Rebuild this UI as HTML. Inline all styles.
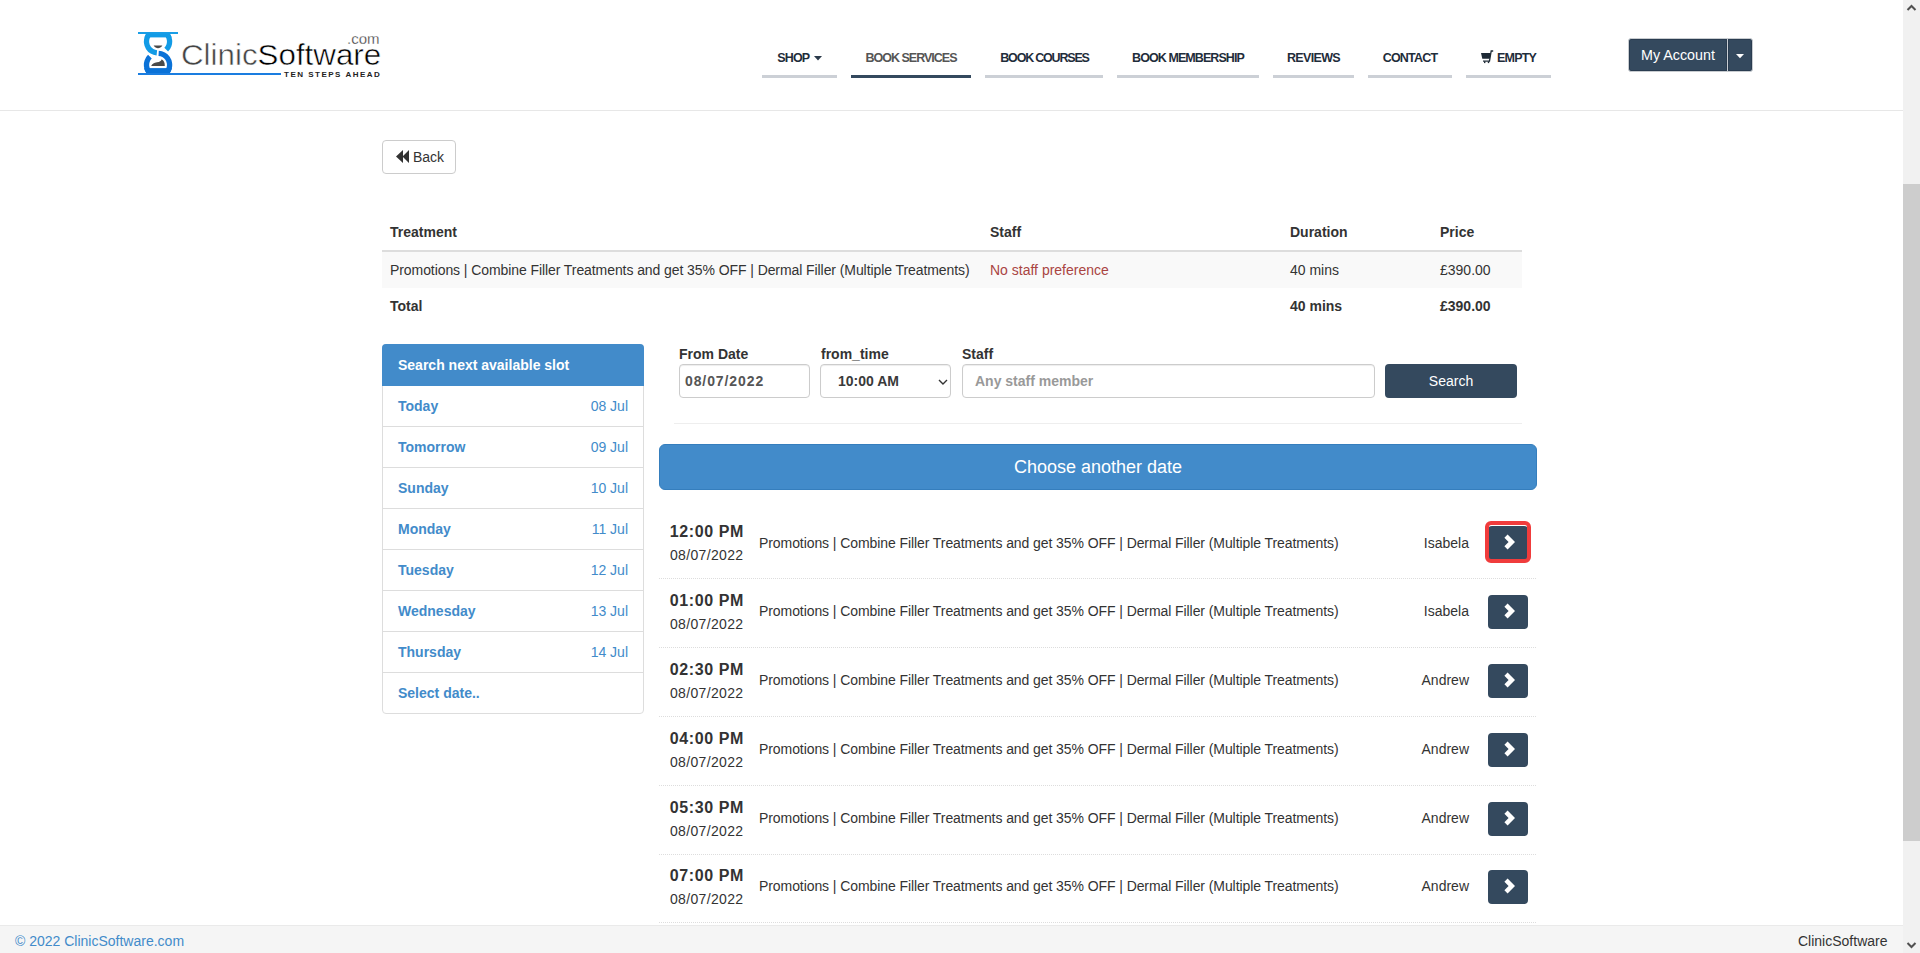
<!DOCTYPE html>
<html>
<head>
<meta charset="utf-8">
<style>
*{box-sizing:border-box;margin:0;padding:0}
html,body{width:1920px;height:953px;overflow:hidden;background:#fff}
body{font-family:"Liberation Sans",sans-serif;font-size:14px;color:#333;position:relative}
.a{position:absolute;white-space:nowrap}
#hdr{position:absolute;left:0;top:0;width:1903px;height:111px;border-bottom:1px solid #e7e7e7;background:#fff}
.nav{position:absolute;top:40px;height:38px;border-bottom:3px solid #ccd0d6;text-align:center;font-weight:bold;font-size:12.5px;color:#1f2d3b;line-height:16px;padding-top:10px;letter-spacing:-0.8px}
.nav.act{border-bottom-color:#34495e;color:#555}
.btnd{background:#34495e;color:#fff}
.panel{position:absolute;left:382px;top:344px;width:262px;height:370px;border:1px solid #ddd;border-radius:4px}
.ph{height:42px;background:#428bca;color:#fff;font-weight:bold;padding-left:16px;line-height:43px;margin:-1px -1px 0 -1px;border-radius:4px 4px 0 0}
.li{height:41px;border-bottom:1px solid #ddd;position:relative;color:#428bca}
.li b{position:absolute;left:15px;top:10px;line-height:20px}
.li span{position:absolute;right:15px;top:10px;line-height:20px}
.lbl{position:absolute;top:344px;font-weight:bold;line-height:20px;color:#333}
.inp{position:absolute;top:364px;height:34px;border:1px solid #ccc;border-radius:4px;background:#fff;line-height:32px;padding-left:5px;color:#555;font-weight:bold;box-shadow:inset 0 1px 1px rgba(0,0,0,.075)}
.th{position:absolute;top:222px;font-weight:bold;line-height:20px;color:#333}
.td{position:absolute;top:260px;line-height:20px;color:#333}
.tt{position:absolute;top:296px;font-weight:bold;line-height:20px;color:#333}
.slot{position:absolute;left:659px;width:877px;height:69px;border-bottom:1px dotted #ddd}
.slot .t{position:absolute;left:0;width:95px;text-align:center;top:12px;font-weight:bold;font-size:16px;line-height:20px;color:#333;letter-spacing:0.6px;text-indent:0.6px}
.slot .d{position:absolute;left:0;width:95px;text-align:center;top:35px;line-height:20px;color:#333;letter-spacing:0.35px;text-indent:0.35px}
.slot .p{position:absolute;left:100px;top:23px;line-height:20px;color:#333;letter-spacing:-0.08px}
.slot .s{position:absolute;right:67px;top:23px;line-height:20px;color:#333;text-align:right}
.slot.up .p,.slot.up .s{top:22px}
.slot .g{position:absolute;left:829px;top:16px;width:40px;height:34px;border-radius:4px;background:#34495e}
.slot .g svg{position:absolute;left:0;top:0}
</style>
</head>
<body>
<div id="hdr">
  <svg class="a" style="left:130px;top:25px" width="70" height="60" viewBox="130 25 70 60">
    <defs>
      <clipPath id="cu"><rect x="130" y="33.8" width="60" height="30"/></clipPath>
      <clipPath id="cuc"><circle cx="158.05" cy="41.5" r="14.2"/></clipPath>
      <clipPath id="cl"><rect x="130" y="45" width="60" height="28.6"/></clipPath>
      <clipPath id="clc"><circle cx="158.05" cy="64.9" r="14.2"/></clipPath>
    </defs>
    <rect x="138" y="32" width="40" height="2" fill="#1a9ee6"/>
    <g clip-path="url(#cu)" fill="#129be6">
      <path d="M156.57,55.62 A14.2,14.2 0 1 1 168.09,51.54 L164.34,47.79 A8.9,8.9 0 1 0 157.12,50.35 Z"/>
      <rect x="140" y="33" width="36" height="4.4" clip-path="url(#cuc)"/>
    </g>
    <g clip-path="url(#cl)" fill="#0b72d7">
      <path d="M158.79,50.72 A14.2,14.2 0 1 1 148.01,54.86 L151.76,58.61 A8.9,8.9 0 1 0 158.52,56.01 Z"/>
      <rect x="140" y="68.1" width="36" height="6" clip-path="url(#clc)"/>
    </g>
    <path fill="#4a4a4a" d="M153.6,45.6 L162.4,45.6 C161.2,47.6 159.6,48.2 158,48.2 C156.4,48.2 154.8,47.6 153.6,45.6 Z"/>
    <path fill="#4a4a4a" d="M151.2,66 L164.8,66 L164.6,63.5 C164.2,61.5 162.8,59.8 161.7,59.2 C161.2,61 159.8,61.8 157,62.3 C154,62.8 152.2,64 151.2,66 Z"/>
  </svg>
  <div class="a" style="left:138px;top:73px;width:143px;height:2px;background:#1a7de0"></div>
  <div class="a" style="left:181px;top:39px;font-size:29px;line-height:32px;transform:scaleX(1.08);transform-origin:0 0;letter-spacing:0;-webkit-text-stroke:0.5px #fff"><span style="color:#444">Clinic</span><span style="color:#000">Software</span></div>
  <div class="a" style="left:347px;top:31px;font-size:15px;line-height:16px;color:#333;-webkit-text-stroke:0.3px #fff">.com</div>
  <div class="a" style="left:284px;top:70px;font-size:8px;line-height:9px;font-weight:bold;letter-spacing:1.5px;color:#222">TEN STEPS AHEAD</div>
</div>

<div class="nav" style="left:762px;width:75px">SHOP <svg width="8" height="5" style="margin-left:2px;vertical-align:1px"><path d="M0,0 L8,0 L4,4.5 Z" fill="#2b3a4a"/></svg></div>
<div class="nav act" style="left:851px;width:120px;letter-spacing:-1px">BOOK SERVICES</div>
<div class="nav" style="left:985px;width:118px;letter-spacing:-1.2px;text-indent:1px">BOOK COURSES</div>
<div class="nav" style="left:1117px;width:142px;letter-spacing:-0.93px">BOOK MEMBERSHIP</div>
<div class="nav" style="left:1273px;width:81px;letter-spacing:-0.65px">REVIEWS</div>
<div class="nav" style="left:1368px;width:84px">CONTACT</div>
<div class="nav" style="left:1466px;width:85px;text-align:left;padding-left:31px">EMPTY<svg class="a" style="left:10px;top:6px" width="24" height="20" viewBox="0 0 24 20"><path fill="#1e2a36" d="M5,6.9 L14.7,6.9 L13.8,12.8 L6.3,12.8 Z"/><path d="M13.4,15.6 L15.2,5 L17.2,5" fill="none" stroke="#1e2a36" stroke-width="1.3"/><path d="M7,15.1 L13.6,15.1" stroke="#1e2a36" stroke-width="1.2"/><rect x="8" y="15.3" width="1.4" height="1.8" fill="#1e2a36"/><rect x="11.8" y="15.3" width="1.4" height="1.8" fill="#1e2a36"/></svg></div>

<div class="a btnd" style="left:1628px;top:38px;width:125px;height:34px;border-radius:3px;border:1px solid #c8ccd0;box-shadow:inset 0 0 0 1px #2a3c50">
  <div class="a" style="left:12px;top:8px;line-height:16px;font-size:14.3px;color:#fff">My Account</div>
  <div class="a" style="left:97px;top:0;width:3px;height:32px;background:#2a3c50"></div>
  <div class="a" style="left:98px;top:0;width:1px;height:32px;background:#c9ced4"></div>
  <svg class="a" style="left:107px;top:15px" width="8" height="5"><path d="M0,0 L8,0 L4,4.3 Z" fill="#fff"/></svg>
</div>

<div class="a" style="left:382px;top:140px;width:74px;height:34px;border:1px solid #ccc;border-radius:4px">
  <svg class="a" style="left:13px;top:8px" width="14" height="14" viewBox="0 0 14 14"><path fill="#333" d="M0,7.5 L7,1 L7,14 Z M6.5,7.5 L13,1 L13,14 Z"/></svg>
  <div class="a" style="left:30px;top:8px;line-height:16px;color:#333">Back</div>
</div>

<div class="th" style="left:390px">Treatment</div>
<div class="th" style="left:990px">Staff</div>
<div class="th" style="left:1290px">Duration</div>
<div class="th" style="left:1440px">Price</div>
<div class="a" style="left:382px;top:250px;width:1140px;height:2px;background:#ddd"></div>
<div class="a" style="left:382px;top:252px;width:1140px;height:36px;background:#f9f9f9"></div>
<div class="td" style="left:390px;letter-spacing:-0.08px">Promotions | Combine Filler Treatments and get 35% OFF | Dermal Filler (Multiple Treatments)</div>
<div class="td" style="left:990px;color:#a94442">No staff preference</div>
<div class="td" style="left:1290px">40 mins</div>
<div class="td" style="left:1440px">£390.00</div>
<div class="tt" style="left:390px">Total</div>
<div class="tt" style="left:1290px">40 mins</div>
<div class="tt" style="left:1440px">£390.00</div>

<div class="panel">
  <div class="ph">Search next available slot</div>
  <div class="li"><b>Today</b><span>08 Jul</span></div>
  <div class="li"><b>Tomorrow</b><span>09 Jul</span></div>
  <div class="li"><b>Sunday</b><span>10 Jul</span></div>
  <div class="li"><b>Monday</b><span>11 Jul</span></div>
  <div class="li"><b>Tuesday</b><span>12 Jul</span></div>
  <div class="li"><b>Wednesday</b><span>13 Jul</span></div>
  <div class="li"><b>Thursday</b><span>14 Jul</span></div>
  <div class="li" style="border:0"><b>Select date..</b></div>
</div>

<div class="lbl" style="left:679px">From Date</div>
<div class="lbl" style="left:821px">from_time</div>
<div class="lbl" style="left:962px">Staff</div>
<div class="inp" style="left:679px;width:131px;letter-spacing:0.9px">08/07/2022</div>
<div class="inp" style="left:820px;width:131px;padding-left:17px;color:#3a3a3a">10:00 AM
  <svg class="a" style="left:117px;top:14px" width="10" height="7"><path d="M1,1 L5,5 L9,1" fill="none" stroke="#333" stroke-width="1.4"/></svg>
</div>
<div class="inp" style="left:962px;width:413px;padding-left:12px;color:#999">Any staff member</div>
<div class="a btnd" style="left:1385px;top:364px;width:132px;height:34px;border-radius:4px;text-align:center;line-height:34px">Search</div>
<div class="a" style="left:674px;top:423px;width:848px;height:1px;background:#eee"></div>

<div class="a" style="left:659px;top:444px;width:878px;height:46px;border-radius:6px;background:#428bca;border:1px solid #357ebd;color:#fff;font-size:18px;text-align:center;line-height:44px">Choose another date</div>

<div class="slot" style="top:510px">
  <div class="t">12:00 PM</div><div class="d">08/07/2022</div>
  <div class="p">Promotions | Combine Filler Treatments and get 35% OFF | Dermal Filler (Multiple Treatments)</div>
  <div class="s">Isabela</div><div class="g"><svg width="40" height="34"><path d="M19.6,8.6 L27,16 L19.6,23.4 L16.4,20.2 L20.6,16 L16.4,11.8 Z" fill="#fff"/></svg></div>
</div>
<div class="a" style="left:1485px;top:521px;width:46px;height:42px;border:4px solid #f03c3c;border-radius:6px"></div>
<div class="slot up" style="top:579px">
  <div class="t">01:00 PM</div><div class="d">08/07/2022</div>
  <div class="p">Promotions | Combine Filler Treatments and get 35% OFF | Dermal Filler (Multiple Treatments)</div>
  <div class="s">Isabela</div><div class="g"><svg width="40" height="34"><path d="M19.6,8.6 L27,16 L19.6,23.4 L16.4,20.2 L20.6,16 L16.4,11.8 Z" fill="#fff"/></svg></div>
</div>
<div class="slot up" style="top:648px">
  <div class="t">02:30 PM</div><div class="d">08/07/2022</div>
  <div class="p">Promotions | Combine Filler Treatments and get 35% OFF | Dermal Filler (Multiple Treatments)</div>
  <div class="s">Andrew</div><div class="g"><svg width="40" height="34"><path d="M19.6,8.6 L27,16 L19.6,23.4 L16.4,20.2 L20.6,16 L16.4,11.8 Z" fill="#fff"/></svg></div>
</div>
<div class="slot up" style="top:717px">
  <div class="t">04:00 PM</div><div class="d">08/07/2022</div>
  <div class="p">Promotions | Combine Filler Treatments and get 35% OFF | Dermal Filler (Multiple Treatments)</div>
  <div class="s">Andrew</div><div class="g"><svg width="40" height="34"><path d="M19.6,8.6 L27,16 L19.6,23.4 L16.4,20.2 L20.6,16 L16.4,11.8 Z" fill="#fff"/></svg></div>
</div>
<div class="slot up" style="top:786px">
  <div class="t">05:30 PM</div><div class="d">08/07/2022</div>
  <div class="p">Promotions | Combine Filler Treatments and get 35% OFF | Dermal Filler (Multiple Treatments)</div>
  <div class="s">Andrew</div><div class="g"><svg width="40" height="34"><path d="M19.6,8.6 L27,16 L19.6,23.4 L16.4,20.2 L20.6,16 L16.4,11.8 Z" fill="#fff"/></svg></div>
</div>
<div class="slot up" style="top:854px">
  <div class="t">07:00 PM</div><div class="d">08/07/2022</div>
  <div class="p">Promotions | Combine Filler Treatments and get 35% OFF | Dermal Filler (Multiple Treatments)</div>
  <div class="s">Andrew</div><div class="g"><svg width="40" height="34"><path d="M19.6,8.6 L27,16 L19.6,23.4 L16.4,20.2 L20.6,16 L16.4,11.8 Z" fill="#fff"/></svg></div>
</div>

<div class="a" style="left:0;top:925px;width:1903px;height:28px;background:#f5f5f5;border-top:1px solid #eaeaea">
  <div class="a" style="left:15px;top:7px;line-height:16px;color:#428bca">© 2022 ClinicSoftware.com</div>
  <div class="a" style="left:1798px;top:7px;line-height:16px;color:#333">ClinicSoftware</div>
</div>
<div class="a" style="left:1903px;top:0;width:17px;height:953px;background:#f1f1f1"></div>
<div class="a" style="left:1903px;top:184px;width:17px;height:657px;background:#cdcdcd"></div>
<svg class="a" style="left:1903px;top:0" width="17" height="17"><path d="M4.5,10 L8.5,6 L12.5,10" fill="none" stroke="#505050" stroke-width="2"/></svg>
<svg class="a" style="left:1903px;top:936px" width="17" height="17"><path d="M4.5,7 L8.5,11 L12.5,7" fill="none" stroke="#505050" stroke-width="2"/></svg>
</body>
</html>
